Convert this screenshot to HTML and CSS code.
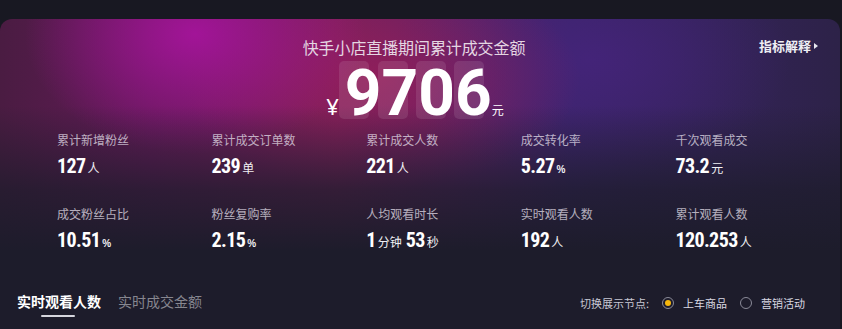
FILE: index.html
```html
<!DOCTYPE html>
<html lang="zh-CN">
<head>
<meta charset="utf-8">
<title>快手小店直播期间累计成交金额</title>
<link rel="stylesheet" href="styles.css">
</head>
<body>
<div class="card">
  <div class="header">
    <div class="spacer"></div>
    <h1 class="title">快手小店直播期间累计成交金额</h1>
    <a class="explain">指标解释<svg class="caret" width="4" height="6" viewBox="0 0 4 6"><path d="M0 0L4 3L0 6Z" fill="#e8e8f0"/></svg></a>
  </div>
  <div class="amount">
    <span class="yen">¥</span>
    <span class="digits"><span class="d">9</span><span class="d">7</span><span class="d">0</span><span class="d">6</span></span>
    <span class="yuan">元</span>
  </div>
  <div class="metrics">
    <div class="metric"><div class="label">累计新增粉丝</div><div class="value"><b>127</b><i>人</i></div></div>
    <div class="metric"><div class="label">累计成交订单数</div><div class="value"><b>239</b><i>单</i></div></div>
    <div class="metric"><div class="label">累计成交人数</div><div class="value"><b>221</b><i>人</i></div></div>
    <div class="metric"><div class="label">成交转化率</div><div class="value"><b>5.27</b><i class="pct">%</i></div></div>
    <div class="metric"><div class="label">千次观看成交</div><div class="value"><b>73.2</b><i>元</i></div></div>
    <div class="metric"><div class="label">成交粉丝占比</div><div class="value"><b>10.51</b><i class="pct">%</i></div></div>
    <div class="metric"><div class="label">粉丝复购率</div><div class="value"><b>2.15</b><i class="pct">%</i></div></div>
    <div class="metric"><div class="label">人均观看时长</div><div class="value"><b>1</b><i>分钟</i><b>53</b><i>秒</i></div></div>
    <div class="metric"><div class="label">实时观看人数</div><div class="value"><b>192</b><i>人</i></div></div>
    <div class="metric"><div class="label">累计观看人数</div><div class="value"><b>120.253</b><i>人</i></div></div>
  </div>
  <div class="bottom">
    <div class="tabs">
      <div class="tab active">实时观看人数</div>
      <div class="tab">实时成交金额</div>
    </div>
    <div class="switch">
      <span class="switch-label">切换展示节点:</span>
      <label class="radio checked"><span class="circle"></span>上车商品</label>
      <label class="radio"><span class="circle"></span>营销活动</label>
    </div>
  </div>
</div>
</body>
</html>
```
FILE: styles.css
```css
* { box-sizing: border-box; }
html, body { margin: 0; padding: 0; }
body {
  width: 842px;
  height: 329px;
  overflow: hidden;
  background: #181822;
  font-family: "Noto Sans CJK SC", "Noto Sans", sans-serif;
  color: #fff;
}
.card {
  margin-top: 19px;
  width: 840px;
  height: 310px;
  border-radius: 12px 12px 0 0;
  background:
    linear-gradient(to bottom, rgba(29,28,43,0) 0, rgba(29,28,43,0) 28%, rgba(29,28,43,0.75) 55%, #1d1c2b 75%),
    radial-gradient(ellipse 170px 120px at 195px 15px, rgba(165,20,155,0.95), rgba(165,20,155,0) 100%),
    radial-gradient(ellipse 200px 110px at 380px 60px, rgba(155,30,90,0.75), rgba(155,30,90,0) 100%),
    radial-gradient(ellipse 200px 120px at 590px 40px, rgba(70,36,125,0.8), rgba(70,36,125,0) 100%),
    linear-gradient(to right, #4a1c42 0, #641a58 18%, #78205a 40%, #5a2266 55%, #3a2468 68%, #2d2248 100%);
}
.header {
  display: grid;
  grid-template-columns: 1fr auto 1fr;
  align-items: center;
  padding-top: 17px;
}
.title {
  margin: 0 12px 0 0;
  font-size: 16px;
  line-height: 22px;
  font-weight: 400;
  color: #e4d6e2;
  letter-spacing: -0.1px;
}
.explain {
  justify-self: end;
  margin-right: 22px;
  display: flex;
  align-items: center;
  gap: 3px;
  font-size: 13px;
  font-weight: 700;
  line-height: 18px;
  color: #eeeef4;
  margin-top: -2px;
}
.amount {
  display: flex;
  justify-content: center;
  align-items: baseline;
  margin-top: 2px;
  height: 70px;
  padding-right: 10px;
}
.yen {
  font-family: "Noto Sans", sans-serif;
  font-size: 22px;
  line-height: 1;
  margin-right: 6px;
  color: #fff;
}
.digits {
  display: flex;
  align-items: baseline;
  font-family: Roboto, "Liberation Sans", sans-serif;
  font-weight: 700;
  font-size: 64px;
  line-height: 68px;
}
.d {
  position: relative;
  display: block;
}
.d::before {
  content: "";
  position: absolute;
  left: -6px;
  top: 1px;
  width: 30px;
  height: 58px;
  border-radius: 5px;
  background: rgba(255,255,255,0.1);
  z-index: 0;
}
.d:nth-child(2)::before { left: -4px; }
.d:nth-child(3)::before { left: -2px; }
.d:nth-child(4)::before { left: -1px; }
.yuan {
  font-size: 12px;
  line-height: 1;
  color: #fff;
  margin-left: 0;
}
.metrics {
  display: grid;
  grid-template-columns: repeat(5, 1fr);
  row-gap: 28px;
  padding: 0 10px 0 57px;
  margin-top: 2px;
}
.label {
  font-size: 12px;
  line-height: 16px;
  color: rgba(230,224,236,0.75);
}
.value {
  margin-top: 6px;
  display: flex;
  align-items: baseline;
  line-height: 24px;
  height: 24px;
}
.value b {
  font-family: Roboto, "Liberation Sans", sans-serif;
  font-weight: 700;
  font-size: 20px;
  font-stretch: 75%;
  letter-spacing: -0.6px;
  color: #fff;
}
.value i {
  font-style: normal;
  font-size: 12px;
  color: #f0f0f4;
  margin: 0 4px 0 2px;
}
.value i.pct {
  font-size: 10px;
  font-weight: 700;
  font-family: "Liberation Sans", sans-serif;
}
.bottom {
  display: flex;
  justify-content: space-between;
  align-items: center;
  margin-top: 39px;
  padding: 0 35px 0 17px;
}
.tabs {
  display: flex;
  gap: 17px;
}
.tab {
  position: relative;
  font-size: 14px;
  line-height: 20px;
  color: #86868f;
}
.tab.active {
  color: #fff;
  font-weight: 700;
}
.tab.active::after {
  content: "";
  position: absolute;
  left: 24px;
  top: 24px;
  width: 34px;
  height: 2px;
  border-radius: 1px;
  background: #d6d6de;
}
.switch {
  display: flex;
  align-items: center;
  font-size: 11px;
  line-height: 16px;
  color: #d8d8e2;
  margin-top: 3px;
}
.switch-label {
  margin-right: 13px;
  color: #c8c8d4;
}
.radio {
  display: flex;
  align-items: center;
  gap: 9px;
  margin-right: 13px;
}
.radio:last-child { margin-right: 0; }
.circle {
  width: 12px;
  height: 12px;
  border-radius: 50%;
  border: 1px solid #8a8a98;
  display: flex;
  align-items: center;
  justify-content: center;
}
.radio.checked .circle::after {
  content: "";
  width: 6px;
  height: 6px;
  border-radius: 50%;
  background: #f6b70c;
}
```
